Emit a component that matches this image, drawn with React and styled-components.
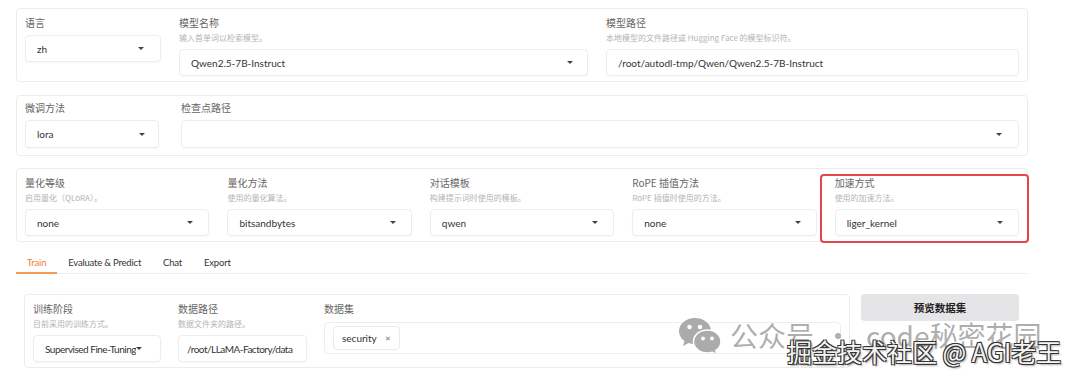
import React from 'react'
import { styled, createGlobalStyle } from 'styled-components'

const Global = createGlobalStyle`
  body {
    margin: 0;
    background: #fff;
    font-family: "Lato", "Noto Sans CJK SC", sans-serif;
    color: #333;
  }
`

const Page = styled.div`
  position: relative;
  width: 1080px;
  height: 379px;
  overflow: hidden;
  padding-top: 8px;
  box-sizing: border-box;
`

const Panel = styled.div`
  display: flex;
  gap: ${p => p.$gap ?? 18}px;
  margin: ${p => p.$mt ?? 0}px 0 0 ${p => p.$ml ?? 16}px;
  width: ${p => p.$w ?? 1012}px;
  box-sizing: border-box;
  padding: ${p => p.$pt ?? 7}px 8px ${p => p.$pb ?? 5}px 8px;
  border: 1px solid #ececec;
  border-radius: 4px;
  align-items: flex-start;
`

const Field = styled.div`
  position: relative;
  display: flex;
  flex-direction: column;
  width: ${p => (p.$w ? `${p.$w}px` : 'auto')};
  flex: ${p => (p.$w ? 'none' : '1')};
  min-width: 0;
`

const Label = styled.div`
  font-size: 10px;
  line-height: 14px;
  color: #666;
  font-family: "Noto Sans CJK SC", "Lato", sans-serif;
  margin-bottom: ${p => (p.$hasHint ? 0 : 5)}px;
`

const Hint = styled.div`
  font-size: 8px;
  line-height: 10px;
  color: #b4b4b4;
  font-family: "Noto Sans CJK SC", "Lato", sans-serif;
  margin: 3px 0 6px;
`

const Box = styled.div`
  display: flex;
  align-items: center;
  height: ${p => p.$h ?? 27}px;
  box-sizing: border-box;
  padding: 0 0 0 ${p => p.$pl ?? 11}px;
  background: #fff;
  border: 1px solid #ededed;
  border-radius: 4px;
  box-shadow: 0 1px 2px rgba(0, 0, 0, 0.03);
  font-size: 10px;
  letter-spacing: ${p => (p.$tight ? '-0.5px' : '0')};
  color: #333;
  white-space: nowrap;
  overflow: hidden;
`

const Value = styled.span`
  flex: ${p => (p.$shrink ? 'none' : '1')};
  overflow: hidden;
`

const Spell = styled.span`
  text-decoration: underline wavy #e8a0a0;
  text-decoration-thickness: 1px;
  text-underline-offset: 2px;
`

const Caret = styled.span`
  flex: none;
  width: 0;
  height: 0;
  margin-right: ${p => p.$mr ?? 15}px;
  border-left: 3px solid transparent;
  border-right: 3px solid transparent;
  border-top: 3.5px solid #444;
`

const Highlight = styled.div`
  position: absolute;
  left: -15px;
  right: -10px;
  top: -2px;
  bottom: -7px;
  border: 2px solid #e2464a;
  border-radius: 4px;
  pointer-events: none;
`

const TabBar = styled.div`
  display: flex;
  margin: 14px 0 0 16px;
  width: 1012px;
  border-bottom: 1px solid #efefef;
`

const Tab = styled.div`
  padding: 0 11px 2px;
  font-size: 9.5px;
  letter-spacing: -0.2px;
  line-height: 14px;
  color: ${p => (p.$active ? '#f07d2d' : '#333')};
  border-bottom: 2px solid ${p => (p.$active ? '#f39a55' : 'transparent')};
  margin-bottom: -1px;
`

const Row = styled.div`
  display: flex;
  gap: 11px;
  margin: 20px 0 0 24px;
  align-items: flex-start;
`

const Tags = styled.div`
  display: flex;
  align-items: center;
  height: 32px;
  box-sizing: border-box;
  padding: 0 8px;
  border: 1px solid #ededed;
  border-radius: 4px;
  margin-top: 1px;
`

const Chip = styled.div`
  display: flex;
  align-items: center;
  gap: 8px;
  height: 22px;
  padding: 0 8px;
  border: 1px solid #eaeaea;
  border-radius: 4px;
  font-size: 10px;
  color: #333;
`

const Close = styled.span`
  font-size: 7px;
  color: #777;
`

const PreviewButton = styled.button`
  width: 158px;
  height: 27px;
  border: none;
  border-radius: 4px;
  background: #e5e5e7;
  font-family: "Noto Sans CJK SC", sans-serif;
  font-weight: 700;
  font-size: 10.5px;
  color: #222;
`

const Mark = styled.div`
  position: absolute;
  left: 678px;
  top: 315px;
  display: flex;
  align-items: center;
  gap: 8px;
  font-family: "Noto Sans CJK SC", sans-serif;
  font-weight: 400;
  font-size: 28px;
  color: rgba(160, 160, 160, 0.85);
  white-space: nowrap;
`

const MarkDot = styled.span`
  margin: 0 14px 0 10px;
`

const Signature = styled.div`
  position: absolute;
  left: 787px;
  top: 335px;
  font-family: "Noto Sans CJK SC", sans-serif;
  font-size: 25px;
  line-height: 32px;
  color: #f4f4f4;
  white-space: nowrap;
  text-shadow: -1px -1px 0 #333, 1px -1px 0 #333, -1px 1px 0 #333, 1px 1px 0 #333, 2px 2px 2px rgba(0,0,0,0.35);
`

function Select({ value, h, mr, tight, shrink }) {
  return (
    <Box $h={h} $tight={tight}>
      <Value $shrink={shrink}>{value}</Value>
      <Caret $mr={mr} />
    </Box>
  )
}

function WeChat() {
  return (
    <svg width="44" height="36" viewBox="0 0 44 36">
      <path d="M17 1C8 1 1 7 1 14c0 4 2 7.5 5.5 10L5 29l5.5-3c2 .6 4.2 1 6.5 1 9 0 16-6 16-13S26 1 17 1z" fill="#ababab" />
      <circle cx="11.5" cy="10" r="2.3" fill="#fff" />
      <circle cx="22" cy="10" r="2.3" fill="#fff" />
      <path d="M29.5 13C21.5 13 15.5 18.3 15.5 24.5S21.5 36 29.5 36c1.8 0 3.5-.3 5-.8l4.5 2.3-1.2-4C41 31.5 43 28.2 43 24.5 43 18.3 37.3 13 29.5 13z" fill="#ababab" stroke="#fff" strokeWidth="1.5" />
      <circle cx="25" cy="21.5" r="1.9" fill="#fff" />
      <circle cx="34" cy="21.5" r="1.9" fill="#fff" />
    </svg>
  )
}

export default function App() {
  return (
    <Page>
      <Global />

      <Panel>
        <Field $w={136}>
          <Label>语言</Label>
          <Select value="zh" mr={16} />
        </Field>
        <Field $w={409}>
          <Label $hasHint>模型名称</Label>
          <Hint>输入首单词以检索模型。</Hint>
          <Select value="Qwen2.5-7B-Instruct" mr={14} />
        </Field>
        <Field>
          <Label $hasHint>模型路径</Label>
          <Hint>本地模型的文件路径或 Hugging Face 的模型标识符。</Hint>
          <Box>
            <Value>/root/<Spell>autodl</Spell>-tmp/<Spell>Qwen</Spell>/<Spell>Qwen2.5-7B-Instruct</Spell></Value>
          </Box>
        </Field>
      </Panel>

      <Panel $mt={13} $pt={5} $pb={7} $gap={22}>
        <Field $w={134}>
          <Label>微调方法</Label>
          <Select value="lora" h={28} mr={13} />
        </Field>
        <Field>
          <Label>检查点路径</Label>
          <Select value="" h={28} mr={16} />
        </Field>
      </Panel>

      <Panel $mt={12}>
        <Field>
          <Label $hasHint>量化等级</Label>
          <Hint>启用量化（QLoRA）。</Hint>
          <Select value="none" />
        </Field>
        <Field>
          <Label $hasHint>量化方法</Label>
          <Hint>使用的量化算法。</Hint>
          <Select value="bitsandbytes" />
        </Field>
        <Field>
          <Label $hasHint>对话模板</Label>
          <Hint>构建提示词时使用的模板。</Hint>
          <Select value="qwen" />
        </Field>
        <Field>
          <Label $hasHint>RoPE 插值方法</Label>
          <Hint>RoPE 插值时使用的方法。</Hint>
          <Select value="none" />
        </Field>
        <Field>
          <Label $hasHint>加速方式</Label>
          <Hint>使用的加速方法。</Hint>
          <Select value="liger_kernel" />
          <Highlight />
        </Field>
      </Panel>

      <TabBar>
        <Tab $active>Train</Tab>
        <Tab>Evaluate &amp; Predict</Tab>
        <Tab>Chat</Tab>
        <Tab>Export</Tab>
      </TabBar>

      <Row>
        <Panel $ml={0} $w={826} $mt={0} $gap={17}>
          <Field $w={128}>
            <Label $hasHint>训练阶段</Label>
            <Hint>目前采用的训练方式。</Hint>
            <Select value="Supervised Fine-Tuning" mr={0} tight shrink />
          </Field>
          <Field $w={129}>
            <Label $hasHint>数据路径</Label>
            <Hint>数据文件夹的路径。</Hint>
            <Box $tight $pl={8}>
              <Value>/root/LLaMA-Factory/data</Value>
            </Box>
          </Field>
          <Field>
            <Label>数据集</Label>
            <Tags>
              <Chip>
                security
                <Close>✕</Close>
              </Chip>
            </Tags>
          </Field>
        </Panel>
        <PreviewButton>预览数据集</PreviewButton>
      </Row>

      <Mark>
        <WeChat />
        <span>公众号<MarkDot>·</MarkDot>code秘密花园</span>
      </Mark>
      <Signature>掘金技术社区 @ AGI老王</Signature>
    </Page>
  )
}
